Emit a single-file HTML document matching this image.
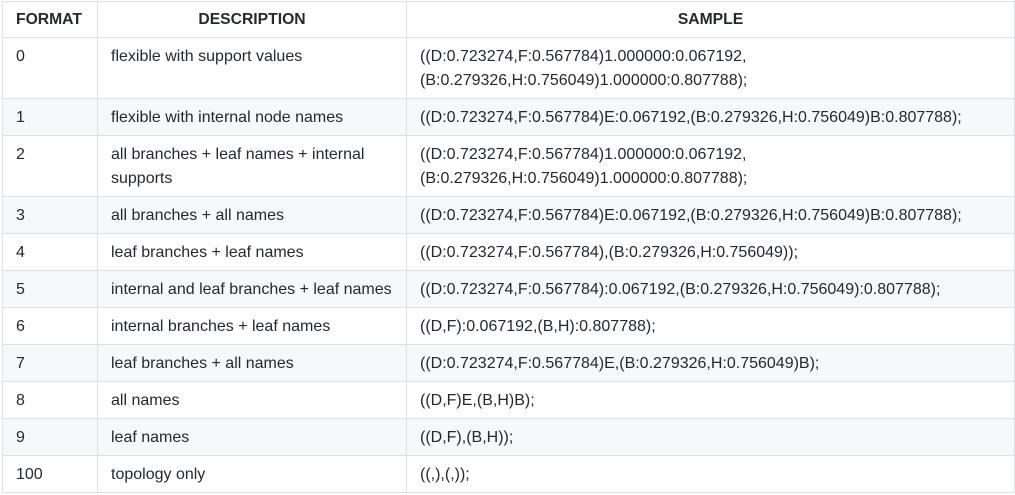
<!DOCTYPE html>
<html><head><meta charset="utf-8"><style>
html,body{margin:0;padding:0;background:#fff;width:1015px;height:495px;overflow:hidden}
table{position:absolute;left:2px;top:1px;border-collapse:collapse;width:1012px;font-family:"Liberation Sans",sans-serif;font-size:16px;color:#24292e;table-layout:fixed}
td,th{border:1px solid #dfe2e5;padding:0 13px;vertical-align:top;line-height:24px}
th{font-size:15.7px;font-weight:bold;height:35px;vertical-align:middle;line-height:20px}
td{padding-top:7px;padding-bottom:5px;height:24px}
tbody tr:nth-child(odd) td{background:#fff}
tbody tr:nth-child(even) td{background:#f6f8fa}
</style></head><body>
<table>
<colgroup><col style="width:95px"><col style="width:309px"><col style="width:608px"></colgroup>
<thead><tr><th style="text-align:left">FORMAT</th><th>DESCRIPTION</th><th>SAMPLE</th></tr></thead>
<tbody>
<tr><td>0</td><td>flexible with support values</td><td>((D:0.723274,F:0.567784)1.000000:0.067192,<br>(B:0.279326,H:0.756049)1.000000:0.807788);</td></tr>
<tr><td>1</td><td>flexible with internal node names</td><td>((D:0.723274,F:0.567784)E:0.067192,(B:0.279326,H:0.756049)B:0.807788);</td></tr>
<tr><td>2</td><td>all branches + leaf names + internal supports</td><td>((D:0.723274,F:0.567784)1.000000:0.067192,<br>(B:0.279326,H:0.756049)1.000000:0.807788);</td></tr>
<tr><td>3</td><td>all branches + all names</td><td>((D:0.723274,F:0.567784)E:0.067192,(B:0.279326,H:0.756049)B:0.807788);</td></tr>
<tr><td>4</td><td>leaf branches + leaf names</td><td>((D:0.723274,F:0.567784),(B:0.279326,H:0.756049));</td></tr>
<tr><td>5</td><td>internal and leaf branches + leaf names</td><td>((D:0.723274,F:0.567784):0.067192,(B:0.279326,H:0.756049):0.807788);</td></tr>
<tr><td>6</td><td>internal branches + leaf names</td><td>((D,F):0.067192,(B,H):0.807788);</td></tr>
<tr><td>7</td><td>leaf branches + all names</td><td>((D:0.723274,F:0.567784)E,(B:0.279326,H:0.756049)B);</td></tr>
<tr><td>8</td><td>all names</td><td>((D,F)E,(B,H)B);</td></tr>
<tr><td>9</td><td>leaf names</td><td>((D,F),(B,H));</td></tr>
<tr><td>100</td><td>topology only</td><td>((,),(,));</td></tr>
</tbody></table>
</body></html>
